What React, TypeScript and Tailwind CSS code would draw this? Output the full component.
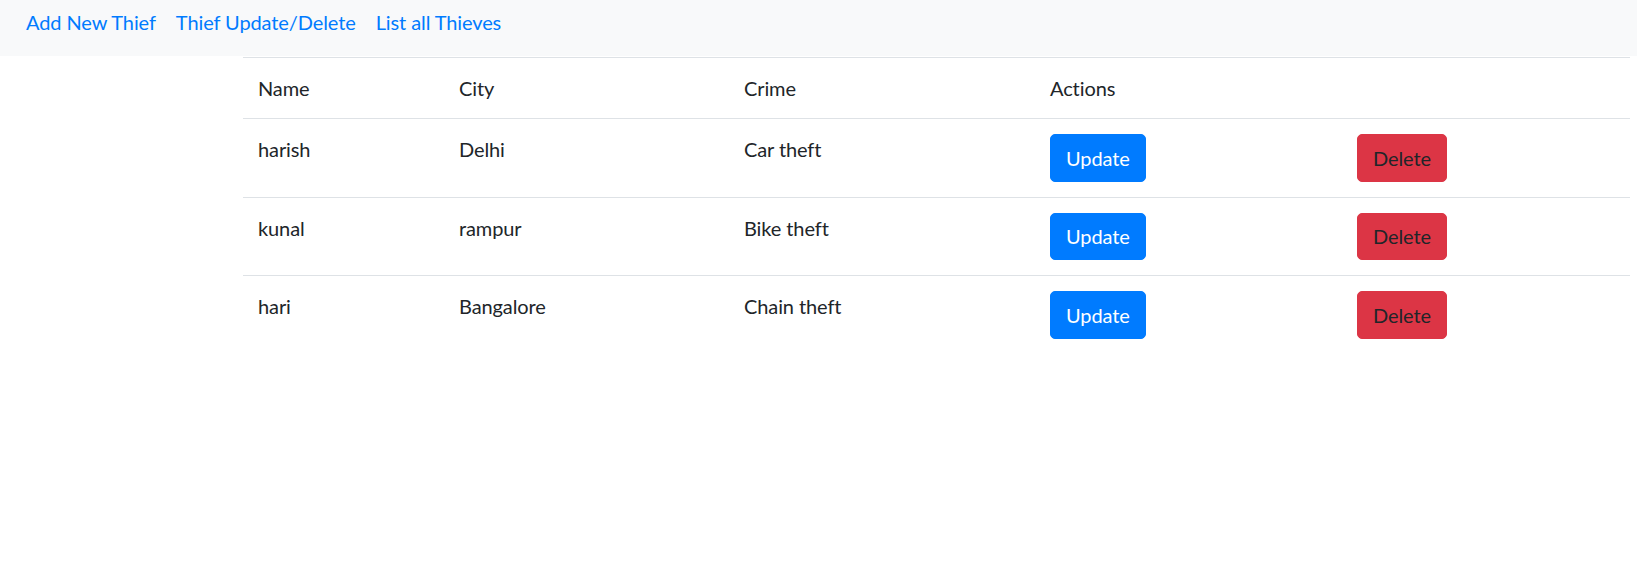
const thieves = [
  { name: "harish", city: "Delhi", crime: "Car theft" },
  { name: "kunal", city: "rampur", crime: "Bike theft" },
  { name: "hari", city: "Bangalore", crime: "Chain theft" },
];

const App = () => {
  return (
    <div className="min-h-screen bg-white text-[20px] leading-[30px] tracking-[-0.1px] text-[#212529] [font-family:Lato,'Liberation_Sans',sans-serif]">
      <nav className="flex h-[56px] items-start bg-[#f8f9fa] pl-[16px] pt-[7px]">
        <a href="#" className="px-[10px] text-[#007bff]">
          Add New Thief
        </a>
        <a href="#" className="px-[10px] text-[#007bff]">
          Thief Update/Delete
        </a>
        <a href="#" className="px-[10px] text-[#007bff]">
          List all Thieves
        </a>
      </nav>

      <div className="pl-[243px] pr-[7px] pt-[1px]">
        <table className="w-full border-collapse text-left">
          <thead>
            <tr className="border-t border-[#dee2e6]">
              <th className="w-[201px] p-[15px] font-normal">Name</th>
              <th className="w-[285px] p-[15px] font-normal">City</th>
              <th className="w-[306px] p-[15px] font-normal">Crime</th>
              <th className="w-[307px] p-[15px] font-normal">Actions</th>
              <th className="p-[15px] font-normal"></th>
            </tr>
          </thead>
          <tbody>
            {thieves.map((t) => (
              <tr key={t.name} className="border-t border-[#dee2e6]">
                <td className="p-[15px] align-top">{t.name}</td>
                <td className="p-[15px] align-top">{t.city}</td>
                <td className="p-[15px] align-top">{t.crime}</td>
                <td className="p-[15px] align-top">
                  <button className="h-[47.5px] rounded-[5px] border border-[#007bff] bg-[#007bff] px-[15px] text-white">
                    Update
                  </button>
                </td>
                <td className="p-[15px] align-top">
                  <button className="h-[47.5px] rounded-[5px] border border-[#dc3545] bg-[#dc3545] px-[15px] text-[#212529]">
                    Delete
                  </button>
                </td>
              </tr>
            ))}
          </tbody>
        </table>
      </div>
    </div>
  );
};

export default App;
